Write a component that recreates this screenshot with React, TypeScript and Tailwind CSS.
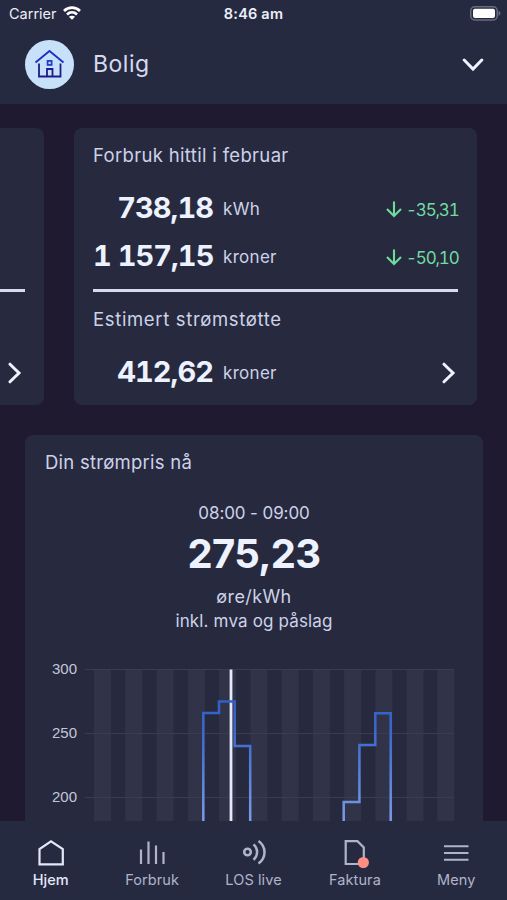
import React from "react";

const Chevron = ({ className }: { className: string }) => (
  <svg viewBox="0 0 14 22" fill="none" stroke="currentColor" strokeWidth="3" className={className}>
    <path d="M2 2.2 L11 11 L2 19.8" strokeLinecap="round" />
  </svg>
);

const Change = ({ value }: { value: string }) => (
  <div className="flex items-center text-[#6fdc9f]">
    <svg width="18" height="18" viewBox="0 0 18 18" fill="none" stroke="currentColor" strokeWidth="2.1" className="mr-[3px]">
      <path d="M9 1.5 V15.5 M2 9 L9 16 L16 9" />
    </svg>
    <span className="w-[52px] pt-[2px] text-[17px] leading-5 tracking-[-1.2px] tabular-nums">{value}</span>
  </div>
);

const Amount = ({ value, unit, children }: { value: string; unit: string; children: React.ReactNode }) => (
  <div className="flex h-12 items-center whitespace-nowrap">
    <span className="w-[120px] text-right text-[29px] leading-none font-bold tracking-[-0.95px] text-[#edf2ff] tabular-nums">
      {value}
    </span>
    <span className="ml-[10px] pt-1 text-[17px] leading-none tracking-[0.3px]">{unit}</span>
    <div className="ml-auto pt-[3px]">{children}</div>
  </div>
);

const StatusBar = () => (
  <div className="grid h-7 grid-cols-3 items-center px-[9px] text-[14.5px] text-[#edeff8]">
    <div className="flex items-center gap-[6px]">
      <span>Carrier</span>
      <svg width="18" height="14" viewBox="0 0 18 14" fill="none" stroke="#fff" strokeWidth="2.7" className="-mt-[2px]">
        <path d="M1 5 C5.5 0.6 12.5 0.6 17 5" />
        <path d="M4 8.4 C6.9 5.7 11.1 5.7 14 8.4" />
        <path d="M9 13.8 L5.9 10.8 C7.6 9.3 10.4 9.3 12.1 10.8 Z" fill="#fff" stroke="none" />
      </svg>
    </div>
    <span className="text-center font-semibold tracking-[0.2px]">8:46 am</span>
    <svg width="31" height="15" viewBox="0 0 31 15" className="-mt-[2px] mr-[-3px] ml-auto">
      <rect x="0.75" y="0.75" width="26.5" height="13.2" rx="4" fill="none" stroke="#696c7e" strokeWidth="1.5" />
      <rect x="3" y="2.8" width="22" height="9.2" rx="2" fill="#fff" />
      <path d="M28.5 5 C31.2 5.6 31.2 9 28.5 9.7 Z" fill="#696c7e" />
    </svg>
  </div>
);

const Header = () => (
  <header className="h-[104px] bg-[#262a40]">
    <StatusBar />
    <div className="flex items-center pt-3 pr-6 pl-[25px]">
      <div className="flex size-[49px] items-center justify-center rounded-full bg-[#c8e1fb]">
        <svg width="31" height="30" viewBox="0 0 31 30" fill="none" stroke="#1f1b8c" strokeWidth="1.8" className="-mt-[3px]">
          <path d="M1.5 14.5 L15.5 3 L29.5 14.5" stroke="#1e2fc0" />
          <path d="M5 15.5 V28.5 H26.5 V15.5" />
          <path d="M13 28.5 V21 H18.5 V28.5" />
          <rect x="13.6" y="12.9" width="4" height="4" stroke="#1e3fc8" />
        </svg>
      </div>
      <h1 className="ml-[19px] text-[23px] tracking-[0.5px] text-[#d5daf0]">Bolig</h1>
      <Chevron className="mr-[3px] ml-auto h-[22px] w-[14px] rotate-90 text-[#edf2ff]" />
    </div>
  </header>
);

const UsageCards = () => (
  <section className="mt-6 flex gap-[30px]">
    <div className="flex h-[277px] w-[44px] shrink-0 flex-col rounded-r-lg bg-[#272a3f]">
      <div className="mt-[161px] h-[3px] w-[25px] bg-[#d9daf0]" />
      <Chevron className="mt-[70px] ml-2 h-[22px] w-[14px] text-[#edf2ff]" />
    </div>
    <div className="h-[277px] w-[403px] shrink-0 rounded-lg bg-[#272a3f] px-[19px] pt-[15px] text-[#cdd2e8]">
      <h2 className="text-[18.5px] leading-6 tracking-[0.33px]">Forbruk hittil i februar</h2>
      <div className="mt-4">
        <Amount value="738,18" unit="kWh">
          <Change value="-35,31" />
        </Amount>
        <Amount value="1 157,15" unit="kroner">
          <Change value="-50,10" />
        </Amount>
      </div>
      <div className="mt-[10px] h-[3px] bg-[#d9daf0]" />
      <h2 className="mt-[15px] text-[18.5px] leading-6 tracking-[0.65px]">Estimert strømstøtte</h2>
      <div className="mt-4">
        <Amount value="412,62" unit="kroner">
          <Chevron className="mr-[2px] h-[22px] w-[14px] text-[#edf2ff]" />
        </Amount>
      </div>
    </div>
  </section>
);

// x positions of every second hour
const stripes = [9, 40.3, 71.6, 102.9, 134.1, 165.4, 196.6, 227.9, 259.1, 290.4, 321.6, 352.3];

const PriceChart = () => (
  <div className="mt-[28px] flex">
    <div className="flex w-[33px] flex-col text-right font-['Liberation_Sans',Arial,sans-serif] text-[15px] leading-4 text-[#c3c6d8]">
      <span>300</span>
      <span className="mt-12">250</span>
      <span className="mt-12">200</span>
    </div>
    <svg width="370" height="160" viewBox="0 0 370 160" fill="none" className="mt-2 ml-2">
      <defs>
        <linearGradient id="price" gradientUnits="userSpaceOnUse" x1="0" y1="30" x2="0" y2="155">
          <stop offset="0" stopColor="#2f5fc8" />
          <stop offset="0.3" stopColor="#3f6bd0" />
          <stop offset="1" stopColor="#7b9fe6" />
        </linearGradient>
      </defs>
      {stripes.map((x) => (
        <rect key={x} x={x} y="0" width="17" height="160" fill="#313348" />
      ))}
      <path d="M0 0.5 H369 M0 64.5 H369 M0 128.5 H369" stroke="#3a3c50" />
      <path d="M146 0.5 V160" stroke="#e6e8fa" strokeWidth="2.8" />
      <path
        d="M118.3 160 V44 H134 V32.5 H149.7 V77 H165.2 V160 M258.7 160 V133 H274.4 V76 H290.3 V44.2 H305.7 V160"
        stroke="url(#price)"
        strokeWidth="2.5"
      />
    </svg>
  </div>
);

const PriceCard = () => (
  <section className="mx-[25px] mt-[30px] h-[386px] w-[458px] overflow-hidden rounded-t-lg bg-[#272a3f] pt-[15px] text-[#cdd2e8]">
    <h2 className="ml-5 text-[18.5px] leading-6 tracking-[0.25px]">Din strømpris nå</h2>
    <div className="mt-[27px] text-center text-[17px] leading-6">
      <p className="tracking-[-0.1px]">08:00 - 09:00</p>
      <p className="mt-1 text-[40px] leading-[50px] font-bold tracking-[-0.7px] text-[#edf2ff]">275,23</p>
      <p className="mt-[6px] text-[18px] tracking-[0.4px]">øre/kWh</p>
      <p className="tracking-[0.15px]">inkl. mva og påslag</p>
    </div>
    <div className="pl-[19px]">
      <PriceChart />
    </div>
  </section>
);

const Tab = ({ label, active, children }: { label: string; active?: boolean; children: React.ReactNode }) => (
  <div className={active ? "flex flex-1 flex-col items-center text-[#e3e7fa]" : "flex flex-1 flex-col items-center text-[#b0b4ca]"}>
    <svg width="28" height="30" viewBox="0 0 28 30" fill="none" stroke="currentColor" strokeWidth="2.2">
      {children}
    </svg>
    <span className={active ? "mt-[2px] text-[14.5px] leading-5 font-medium" : "mt-[2px] text-[14.5px] leading-5 tracking-[0.1px]"}>
      {label}
    </span>
  </div>
);

const TabBar = () => (
  <nav className="flex h-[79px] bg-[#262a40] pt-[17px]">
    <Tab label="Hjem" active>
      <path d="M2.5 26.4 V11.2 L14 3.4 L25.8 11.2 V26.4 Z" />
    </Tab>
    <Tab label="Forbruk">
      <path d="M3 11.5 V26 M10.5 3.5 V26 M18 7.5 V26 M25.5 14 V26" />
    </Tab>
    <Tab label="LOS live">
      <circle cx="7.5" cy="14" r="3.3" strokeWidth="2.6" />
      <path d="M13.5 6.4 C18.3 10.5 18.3 17.5 13.5 21.7 M18.5 3 C26.5 8.5 26.5 20 18.5 25.5" strokeWidth="2.5" />
    </Tab>
    <Tab label="Faktura">
      <path d="M4.7 26 V3.2 H16.5 L22.8 9.5 V26 Z" />
      <circle cx="22.3" cy="24.5" r="5.6" fill="#ff8f84" stroke="none" />
    </Tab>
    <Tab label="Meny">
      <path d="M2 8.3 H26.5 M2 15 H26.5 M2 21.7 H26.5" strokeWidth="1.9" />
    </Tab>
  </nav>
);

export default function App() {
  return (
    <div className="h-[900px] w-[507px] overflow-hidden bg-[#1f1a30] font-['Inter',sans-serif]">
      <Header />
      <UsageCards />
      <PriceCard />
      <TabBar />
    </div>
  );
}
